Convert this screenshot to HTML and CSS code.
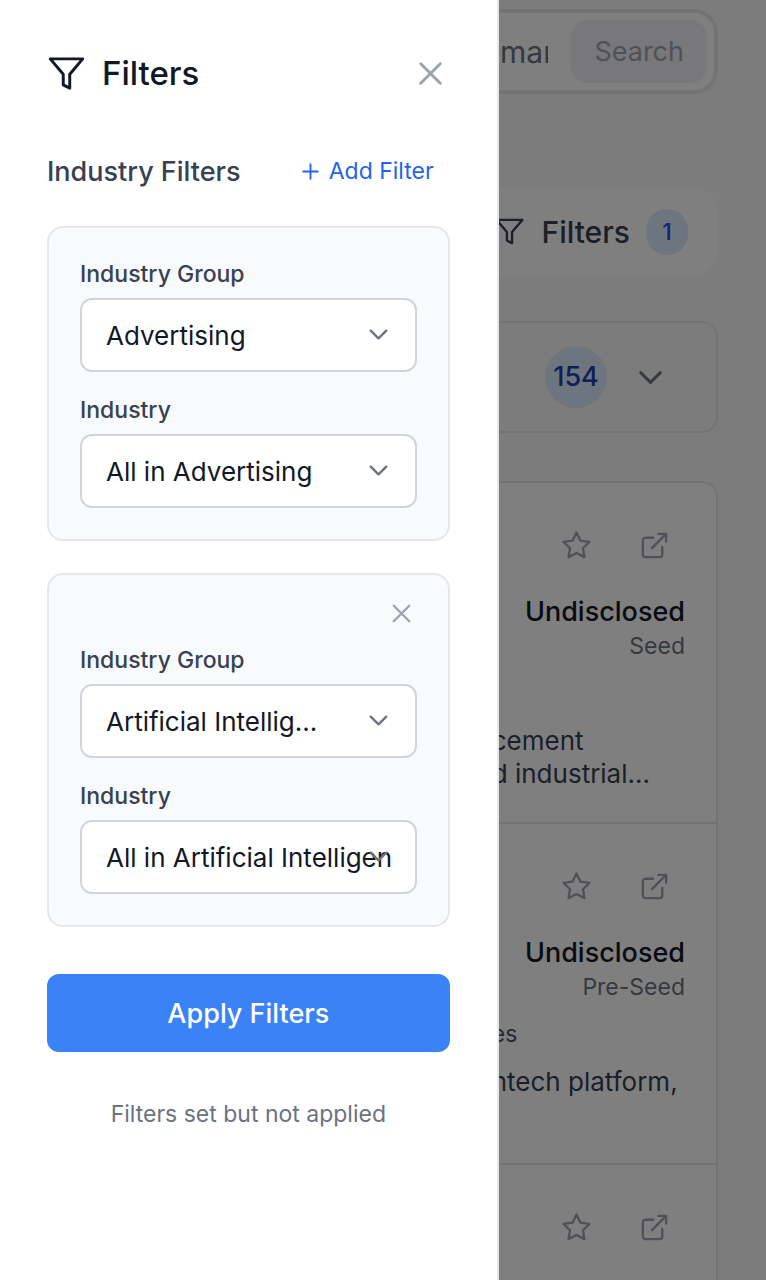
FILE: index.html
```html
<!DOCTYPE html>
<html lang="en">
<head>
<meta charset="utf-8">
<meta name="viewport" content="width=device-width, initial-scale=1">
<title>Filters</title>
<link rel="stylesheet" href="styles.css">
</head>
<body>
<svg class="sprite" aria-hidden="true">
  <symbol id="filter" viewBox="0 0 24 24"><path d="M22 3H2l8 9.46V19l4 2v-8.54L22 3z"/></symbol>
  <symbol id="close" viewBox="0 0 24 24"><path d="M18 6 6 18M6 6l12 12"/></symbol>
  <symbol id="plus" viewBox="0 0 24 24"><path d="M5 12h14M12 5v14"/></symbol>
  <symbol id="chevron" viewBox="0 0 24 24"><path d="m6 9 6 6 6-6"/></symbol>
  <symbol id="star" viewBox="0 0 24 24"><path d="m12 2 3.09 6.26L22 9.27l-5 4.87 1.18 6.88L12 17.77l-6.18 3.25L7 14.14 2 9.27l6.91-1.01L12 2z"/></symbol>
  <symbol id="external" viewBox="0 0 24 24"><path d="M18 13v6a2 2 0 0 1-2 2H5a2 2 0 0 1-2-2V8a2 2 0 0 1 2-2h6M15 3h6v6M10 14 21 3"/></symbol>
</svg>

<main class="page">
  <form class="search">
    <input class="search-input" type="text" placeholder="market" aria-label="Search">
    <button class="search-button" type="button">Search</button>
  </form>

  <button class="filter-bar" type="button">
    <svg class="icon icon-sm"><use href="#filter"/></svg>
    <span>Filters</span>
    <span class="badge">1</span>
  </button>

  <section class="summary">
    <span class="count">154</span>
    <button class="icon-button" type="button" aria-label="Expand"><svg class="icon icon-lg"><use href="#chevron"/></svg></button>
  </section>

  <section class="results">
    <article class="result">
      <div class="actions">
        <button class="icon-button" type="button" aria-label="Save"><svg class="icon icon-sm"><use href="#star"/></svg></button>
        <a class="icon-button" href="#" aria-label="Open"><svg class="icon icon-sm"><use href="#external"/></svg></a>
      </div>
      <div class="amount">Undisclosed</div>
      <div class="stage">Seed</div>
      <div class="meta"></div>
      <p class="description">cement<br>d industrial...</p>
    </article>
    <article class="result">
      <div class="actions">
        <button class="icon-button" type="button" aria-label="Save"><svg class="icon icon-sm"><use href="#star"/></svg></button>
        <a class="icon-button" href="#" aria-label="Open"><svg class="icon icon-sm"><use href="#external"/></svg></a>
      </div>
      <div class="amount">Undisclosed</div>
      <div class="stage">Pre-Seed</div>
      <div class="meta">es</div>
      <p class="description">ntech platform,</p>
    </article>
    <article class="result">
      <div class="actions">
        <button class="icon-button" type="button" aria-label="Save"><svg class="icon icon-sm"><use href="#star"/></svg></button>
        <a class="icon-button" href="#" aria-label="Open"><svg class="icon icon-sm"><use href="#external"/></svg></a>
      </div>
    </article>
  </section>
</main>

<div class="overlay"></div>

<aside class="drawer" role="dialog" aria-labelledby="drawer-title">
  <header class="drawer-header">
    <svg class="icon icon-lg"><use href="#filter"/></svg>
    <h1 class="drawer-title" id="drawer-title">Filters</h1>
    <button class="icon-button dismiss" type="button" aria-label="Close"><svg class="icon icon-lg"><use href="#close"/></svg></button>
  </header>

  <div class="section-header">
    <h2 class="section-title">Industry Filters</h2>
    <button class="add-button" type="button"><svg class="icon icon-xs"><use href="#plus"/></svg>Add Filter</button>
  </div>

  <div class="groups">
    <div class="group">
      <div class="field">
        <label class="label" for="group-1">Industry Group</label>
        <div class="select-box">
          <select class="select" id="group-1"><option>Advertising</option></select>
          <svg class="icon icon-sm select-chevron"><use href="#chevron"/></svg>
        </div>
      </div>
      <div class="field">
        <label class="label" for="industry-1">Industry</label>
        <div class="select-box">
          <select class="select" id="industry-1"><option>All in Advertising</option></select>
          <svg class="icon icon-sm select-chevron"><use href="#chevron"/></svg>
        </div>
      </div>
    </div>

    <div class="group group-removable">
      <button class="icon-button dismiss" type="button" aria-label="Remove filter"><svg class="icon icon-sm"><use href="#close"/></svg></button>
      <div class="field">
        <label class="label" for="group-2">Industry Group</label>
        <div class="select-box">
          <select class="select" id="group-2"><option>Artificial Intellig...</option></select>
          <svg class="icon icon-sm select-chevron"><use href="#chevron"/></svg>
        </div>
      </div>
      <div class="field">
        <label class="label" for="industry-2">Industry</label>
        <div class="select-box">
          <select class="select" id="industry-2"><option>All in Artificial Intelligence</option></select>
          <svg class="icon icon-sm select-chevron"><use href="#chevron"/></svg>
        </div>
      </div>
    </div>
  </div>

  <button class="apply" type="button">Apply Filters</button>
  <p class="status">Filters set but not applied</p>
</aside>
</body>
</html>
```
FILE: styles.css
```css
* {
  box-sizing: border-box;
}

body {
  margin: 0;
  overflow: hidden;
  background: #f9f9fb;
  color: #111827;
  font-family: Inter, "Liberation Sans", sans-serif;
  font-size: 27px;
}

button,
input,
select {
  margin: 0;
  padding: 0;
  border: 0;
  background: none;
  color: inherit;
  font: inherit;
}

h1,
h2,
p {
  margin: 0;
}

.sprite {
  display: none;
}

.icon {
  display: block;
  flex: none;
  fill: none;
  stroke: currentColor;
  stroke-width: 1.8;
  stroke-linecap: round;
  stroke-linejoin: round;
}

.icon-xs {
  width: 25px;
  height: 25px;
}

.icon-sm {
  width: 31px;
  height: 31px;
}

.icon-lg {
  width: 39px;
  height: 39px;
}

.icon-button {
  display: block;
  color: #6b7280;
}

/* Page behind the drawer */

.page {
  display: flex;
  flex-direction: column;
  height: 100vh;
  padding: 9px 48px 0;
  overflow: hidden;
}

.page > * {
  flex: none;
}

.search {
  display: flex;
  gap: 23px;
  padding: 7px;
  border: 4px solid #e5e7eb;
  border-radius: 24px;
  background: #fff;
}

.search-input {
  flex: 1;
  min-width: 0;
  padding-left: 441px;
  font-size: 30px;
}

.search-input::placeholder {
  color: #6b7280;
  opacity: 1;
}

.search-button {
  height: 63px;
  padding: 0 23px;
  border-radius: 16px;
  background: #f1f1f5;
  color: #9ca3af;
}

.filter-bar {
  display: flex;
  align-items: center;
  justify-content: flex-end;
  gap: 16px;
  height: 87px;
  margin-top: 94px;
  padding: 0 30px;
  border-radius: 24px;
  background: #fff;
  color: #374151;
  font-size: 30px;
  font-weight: 500;
}

.badge {
  min-width: 42px;
  padding: 8px 0;
  border-radius: 24px;
  background: #dbeafe;
  color: #1d4ed8;
  font-size: 23px;
  line-height: 30px;
  text-align: center;
}

.summary {
  display: flex;
  align-items: center;
  justify-content: flex-end;
  gap: 24px;
  margin-top: 46px;
  padding: 23px 46px;
  border: 2px solid #e5e7eb;
  border-radius: 16px;
}

.count {
  min-width: 62px;
  border-radius: 50%;
  background: #dbeafe;
  color: #1e40af;
  font-weight: 500;
  line-height: 62px;
  text-align: center;
}

.results {
  margin-top: 48px;
  border: 2px solid #e5e7eb;
  border-radius: 16px;
  background: #fff;
}

.result {
  display: grid;
  grid-template-columns: 17fr 8fr;
  padding: 47px 31px 31px;
}

.result > * {
  grid-column: 2;
}

.result + .result {
  border-top: 2px solid #e5e7eb;
}

.actions {
  display: flex;
  justify-content: flex-end;
  gap: 47px;
  padding-right: 15px;
  margin-bottom: 31px;
}

.actions .icon-button {
  color: #9ca3af;
}

.amount {
  font-weight: 500;
  line-height: 39px;
  text-align: right;
}

.stage {
  color: #6b7280;
  font-size: 23px;
  line-height: 31px;
  text-align: right;
}

.meta {
  min-height: 31px;
  margin: 16px 0 15px;
  color: #4b5563;
  font-size: 23px;
  line-height: 31px;
}

.description {
  min-height: 67px;
  color: #374151;
  font-size: 26px;
  line-height: 33px;
  white-space: nowrap;
}

.overlay {
  position: fixed;
  inset: 0;
  background: rgba(0, 0, 0, 0.5);
}

/* Drawer */

.drawer {
  position: fixed;
  inset: 0 auto 0 0;
  width: 65.1%;
  padding: 47px;
  overflow-y: auto;
  border-right: 2px solid #e5e7eb;
  background: #fff;
}

.drawer-header {
  display: flex;
  align-items: center;
  gap: 16px;
  height: 52px;
}

.drawer-title {
  font-size: 33px;
  font-weight: 500;
}

.dismiss {
  margin-left: auto;
  color: #9ca3af;
}

.section-header {
  display: flex;
  align-items: center;
  justify-content: space-between;
  height: 50px;
  margin-top: 47px;
}

.section-title {
  color: #374151;
  font-size: 27px;
  font-weight: 500;
}

.add-button {
  display: flex;
  align-items: center;
  gap: 6px;
  padding: 0 16px;
  color: #2563eb;
  font-size: 23px;
}

.groups {
  display: flex;
  flex-direction: column;
  gap: 32px;
  margin-top: 30px;
}

.group {
  display: flex;
  flex-direction: column;
  gap: 23px;
  padding: 31px;
  border: 2px solid #e5e7eb;
  border-radius: 16px;
  background: #f9fafb;
}

.group-removable {
  padding-top: 23px;
}

.group-removable .dismiss {
  margin-bottom: -7px;
}

.field {
  display: flex;
  flex-direction: column;
  gap: 8px;
}

.label {
  color: #374151;
  font-size: 23px;
  font-weight: 500;
  line-height: 31px;
}

.select-box {
  position: relative;
}

.select {
  display: block;
  width: 100%;
  height: 74px;
  padding: 0 24px;
  border: 2px solid #d1d5db;
  border-radius: 12px;
  appearance: none;
  background: #fff;
  color: #111827;
  font-size: 26px;
  text-overflow: clip;
}

.select-chevron {
  position: absolute;
  top: 21px;
  right: 23px;
  color: #6b7280;
  pointer-events: none;
}

.apply {
  display: block;
  width: 100%;
  height: 78px;
  margin-top: 47px;
  border-radius: 12px;
  background: #3b82f6;
  color: #fff;
  font-weight: 500;
}

.status {
  margin-top: 47px;
  color: #6b7280;
  font-size: 23px;
  line-height: 31px;
  text-align: center;
}
```
